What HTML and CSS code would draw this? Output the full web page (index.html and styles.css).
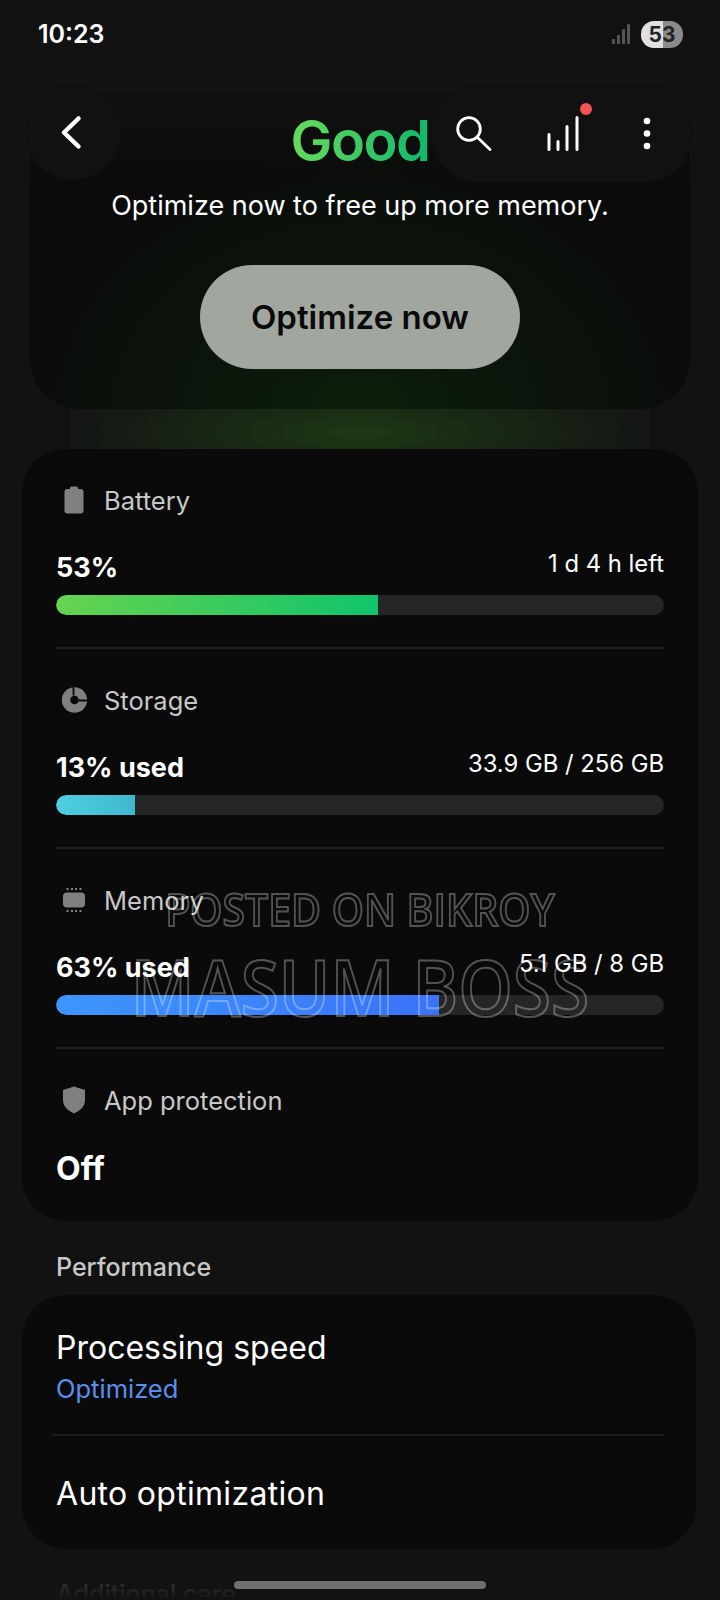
FILE: index.html
```html
<!DOCTYPE html>
<html lang="en">
<head>
  <meta charset="UTF-8">
  <meta name="viewport" content="width=device-width, initial-scale=1.0">
  <title>Device care</title>
  <link rel="stylesheet" href="styles.css">
</head>
<body>
  <div class="screen">

    <div class="status">
      <span class="time">10:23</span>
      <div class="status-right">
        <svg class="signal" width="20" height="20" viewBox="0 0 20 20">
          <rect x="1" y="15" width="3" height="5" rx="1" fill="#555"/>
          <rect x="6" y="11" width="3" height="9" rx="1" fill="#555"/>
          <rect x="11" y="5" width="3" height="15" rx="1" fill="#555"/>
          <rect x="16" y="0" width="3" height="20" rx="1" fill="#555"/>
        </svg>
        <div class="batt"><span>53</span></div>
      </div>
    </div>

    <header class="topbar">
      <button class="back">
        <svg width="30" height="40" viewBox="0 0 30 40"><path d="M22.500 6.500 L8 20.500 L22.500 34.500" fill="none" stroke="#fff" stroke-width="4.500" stroke-linecap="round" stroke-linejoin="round"/></svg>
      </button>
      <div class="actions">
        <svg class="act-search" width="40" height="40" viewBox="0 0 40 40"><circle cx="15" cy="16" r="11.300" fill="none" stroke="#fff" stroke-width="2.800"/><path d="M23.500 24.500 L36 36.500" stroke="#fff" stroke-width="2.800" stroke-linecap="round"/></svg>
        <div class="bars">
          <svg width="34" height="38" viewBox="0 0 34 38"><path d="M3 20.500V35.500M12 27.500V35.500M21 12.500V35.500M31 3.500V35.500" stroke="#fff" stroke-width="3" stroke-linecap="round"/></svg>
          <i class="dot"></i>
        </div>
        <svg class="act-more" width="10" height="38" viewBox="0 0 10 38"><circle cx="5" cy="7" r="3.300" fill="#fff"/><circle cx="5" cy="19.500" r="3.300" fill="#fff"/><circle cx="5" cy="32" r="3.300" fill="#fff"/></svg>
      </div>
    </header>

    <section class="hero">
      <h1 class="good">Good</h1>
      <p class="hint">Optimize now to free up more memory.</p>
      <button class="optimize">Optimize now</button>
    </section>
    <div class="glow"></div>

    <section class="card stats">
      <div class="stat">
        <div class="stat-head">
          <svg class="ico" width="26" height="28" viewBox="0 0 26 28"><rect x="3.500" y="3" width="19" height="24.500" rx="3" fill="#808080"/><rect x="9" y="0.500" width="8" height="5" rx="1.500" fill="#808080"/></svg>
          <span>Battery</span>
        </div>
        <div class="stat-row"><b>53%</b><span>1 d 4 h left</span></div>
        <div class="track"><div class="fill fill-green" style="width: 53%"></div></div>
      </div>
      <div class="stat">
        <div class="stat-head">
          <svg class="ico" width="26" height="28" viewBox="0 0 26 28"><circle cx="13.500" cy="14" r="8.500" fill="none" stroke="#808080" stroke-width="8.400"/><path d="M12.500 0V9.500M17.500 14.500H27" stroke="#0a0a0a" stroke-width="1.800"/></svg>
          <span>Storage</span>
        </div>
        <div class="stat-row"><b>13% used</b><span>33.9 GB / 256 GB</span></div>
        <div class="track"><div class="fill fill-cyan" style="width: 13%"></div></div>
      </div>
      <div class="stat">
        <div class="stat-head">
          <svg class="ico" width="26" height="28" viewBox="0 0 26 28"><rect x="2" y="6.500" width="22" height="15" rx="4" fill="#808080"/><path d="M6.500 2V4M11 2V4M15 2V4M19.500 2V4M6.500 24V26M11 24V26M15 24V26M19.500 24V26" stroke="#808080" stroke-width="2"/></svg>
          <span>Memory</span>
        </div>
        <div class="stat-row"><b>63% used</b><span>5.1 GB / 8 GB</span></div>
        <div class="track"><div class="fill fill-blue" style="width: 63%"></div></div>
      </div>
      <div class="stat last">
        <div class="stat-head">
          <svg class="ico" width="26" height="28" viewBox="0 0 26 28"><path d="M13 0.500 L24 4V14c0 6.500-4.500 10.500-11 13.500C6.500 24.500 2 20.500 2 14V4z" fill="#808080"/></svg>
          <span>App protection</span>
        </div>
        <div class="stat-row"><b class="big">Off</b></div>
      </div>
    </section>

    <h2 class="section-title">Performance</h2>
    <section class="card perf">
      <div class="perf-row first">
        <div class="perf-name">Processing speed</div>
        <div class="perf-sub">Optimized</div>
      </div>
      <div class="perf-row">
        <div class="perf-name auto">Auto optimization</div>
      </div>
    </section>
    <h2 class="section-title next">Additional care</h2>

    <div class="fade"></div>
    <div class="homebar"></div>

    <div class="mark">
      <div class="mark-small">POSTED ON BIKROY</div>
      <div class="mark-big">MASUM BOSS</div>
    </div>
  </div>
</body>
</html>
```

FILE: styles.css
```css
* {
  margin: 0;
  padding: 0;
  box-sizing: border-box;
}
body {
  background: #121212;
  font-family: 'Inter', sans-serif;
  color: white;
}
.screen {
  position: relative;
  width: 720px;
  height: 1600px;
  overflow: hidden;
  background: #121212;
}

/* status bar */
.status {
  display: flex;
  justify-content: space-between;
  align-items: center;
  height: 68px;
  padding: 0 37px 0 38px;
}
.time {
  font-size: 25px;
  font-weight: 600;
}
.status-right {
  display: flex;
  align-items: center;
  gap: 10px;
}
.batt {
  width: 42px;
  height: 27px;
  border-radius: 13px;
  background: linear-gradient(90deg, #e0e0e0 53%, #8a8a8a 53%);
  color: #222;
  font-size: 21px;
  font-weight: 700;
  display: flex;
  justify-content: center;
  align-items: center;
}

/* back + actions float over the hero */
.topbar {
  position: absolute;
  top: 84px;
  left: 26px;
  right: 27px;
  display: flex;
  justify-content: space-between;
}
.back {
  width: 95px;
  height: 96px;
  border: none;
  border-radius: 50%;
  background: #111;
  display: flex;
  justify-content: center;
  align-items: center;
  padding-right: 6px;
}
.actions {
  width: 262px;
  height: 98px;
  border-radius: 49px;
  background: #111;
  display: flex;
  align-items: center;
  padding-left: 23px;
}
.bars {
  position: relative;
  display: flex;
  margin-left: 52px;
}
.act-more {
  margin-left: 62px;
}
.dot {
  position: absolute;
  top: -11px;
  right: -12px;
  width: 12px;
  height: 12px;
  border-radius: 50%;
  background: #f05454;
}

/* hero */
.hero {
  margin: 22px 30px 0;
  height: 319px;
  border-radius: 50px;
  background:
    radial-gradient(ellipse 340px 260px at 50% 100%, #0c1f0c, transparent),
    linear-gradient(180deg, #111 0, #0a0b0a 90px);
  text-align: center;
  padding-top: 17px;
}
.good {
  font-size: 56px;
  font-weight: 600;
  line-height: 68px;
  letter-spacing: -1.500px;
  display: inline-block;
  background: linear-gradient(90deg, #68db5c, #0fb86c);
  -webkit-background-clip: text;
  background-clip: text;
  color: transparent;
}
.hint {
  font-size: 27px;
  line-height: 34px;
  margin-top: 14px;
}
.optimize {
  display: block;
  width: 320px;
  height: 104px;
  margin: 42px auto 0;
  border: none;
  border-radius: 52px;
  background: #a1a69f;
  color: #0a0a0a;
  font-family: inherit;
  font-size: 33px;
  font-weight: 600;
}
.glow {
  height: 40px;
  margin: 0 70px;
  background: radial-gradient(ellipse 50% 180% at 50% 60%, #1d3814, #141614);
}

/* cards */
.card {
  background: #0a0a0a;
  margin: 0 22px;
}
.stats {
  height: 772px;
  border-radius: 44px;
  padding: 0 34px;
}
.stat {
  height: 200px;
  padding-top: 36px;
  border-bottom: 2px solid #1c1c1c;
}
.stat.last {
  border-bottom: none;
}
.stat-head {
  display: flex;
  align-items: center;
  height: 30px;
  gap: 17px;
  font-size: 25.500px;
  color: #c8c8c8;
}
.ico {
  flex: none;
  margin-left: 5px;
}
.stat-row {
  display: flex;
  justify-content: space-between;
  align-items: flex-end;
  height: 40px;
  margin-top: 30px;
  font-size: 23.800px;
}
.stat-row span {
  margin-bottom: 7px;
}
.stat-row b {
  font-size: 27px;
  font-weight: 700;
  margin-bottom: 1px;
}
.stat-row b.big {
  font-size: 32px;
  margin-bottom: -3px;
}
.track {
  height: 20px;
  margin-top: 10px;
  border-radius: 10px;
  background: #262626;
  overflow: hidden;
}
.fill {
  height: 100%;
  border-radius: 10px 0 0 10px;
}
.fill-green {
  background: linear-gradient(90deg, #66d34f, #10c46c);
}
.fill-cyan {
  background: linear-gradient(90deg, #4fcfe0, #3fb8d0);
}
.fill-blue {
  background: linear-gradient(90deg, #3d96fb, #3a72f8);
}

.section-title {
  margin: 27px 0 0 56px;
  font-size: 25px;
  line-height: 38px;
  font-weight: 500;
  color: #c8c8c8;
}
.perf {
  height: 254px;
  margin-top: 9px;
  margin-right: 24px;
  border-radius: 44px;
  padding: 0 32px 0 30px;
}
.perf-row {
  height: 113px;
  padding: 36px 0 0 4px;
}
.perf-row.first {
  height: 141px;
  padding-top: 31px;
  border-bottom: 2px solid #1c1c1c;
}
.perf-name {
  font-size: 32px;
  line-height: 44px;
}
.perf-name.auto {
  letter-spacing: 0.300px;
}
.perf-sub {
  font-size: 25.500px;
  line-height: 37px;
  color: #5a8fee;
}
.section-title.next {
  margin-top: 26px;
}

/* bottom of the screen */
.fade {
  position: absolute;
  left: 0;
  right: 0;
  bottom: 0;
  height: 30px;
  background: linear-gradient(180deg, rgba(18, 18, 18, 0.7), #121212);
}
.homebar {
  position: absolute;
  left: 234px;
  bottom: 11px;
  width: 252px;
  height: 8px;
  border-radius: 4px;
  background: #6f6f6f;
}

/* watermark over the card */
.mark {
  position: absolute;
  left: 0;
  right: 0;
  top: 880px;
  text-align: center;
  font-family: 'Open Sans', sans-serif;
  font-weight: 600;
  color: transparent;
  -webkit-text-stroke: 2px rgba(255, 255, 255, 0.3);
  transform: scaleX(0.89);
}
.mark-small {
  font-size: 46px;
  line-height: 56px;
}
.mark-big {
  font-size: 78px;
  line-height: 90px;
  margin-top: 5px;
}
```
